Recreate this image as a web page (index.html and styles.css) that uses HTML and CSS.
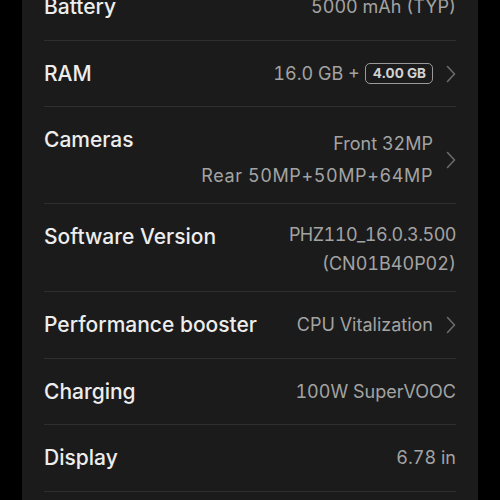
FILE: index.html
```html
<!DOCTYPE html>
<html>
<head>
<meta charset="utf-8">
<link rel="stylesheet" href="styles.css">
</head>
<body>
<div class="panel">
  <div class="row">
    <div class="label">Battery</div>
    <div class="value">5000 mAh (TYP)</div>
  </div>
  <div class="row">
    <div class="label">RAM</div>
    <div class="right">
      <div class="value">16.0 GB +<span class="badge">4.00 GB</span></div>
      <svg class="chev" viewBox="0 0 10 18"><path d="M1.5 1.5 L8.5 9 L1.5 16.5"/></svg>
    </div>
  </div>
  <div class="row row-cameras">
    <div class="label">Cameras</div>
    <div class="right">
      <div class="value multi cams"><div>Front 32MP</div><div class="wide">Rear 50MP+50MP+64MP</div></div>
      <svg class="chev" viewBox="0 0 10 18"><path d="M1.5 1.5 L8.5 9 L1.5 16.5"/></svg>
    </div>
  </div>
  <div class="row row-software">
    <div class="label">Software Version</div>
    <div class="value multi soft"><div class="tight">PHZ110_16.0.3.500</div><div>(CN01B40P02)</div></div>
  </div>
  <div class="row">
    <div class="label">Performance booster</div>
    <div class="right">
      <div class="value">CPU Vitalization</div>
      <svg class="chev" viewBox="0 0 10 18"><path d="M1.5 1.5 L8.5 9 L1.5 16.5"/></svg>
    </div>
  </div>
  <div class="row">
    <div class="label">Charging</div>
    <div class="value">100W SuperVOOC</div>
  </div>
  <div class="row">
    <div class="label">Display</div>
    <div class="value">6.78 in</div>
  </div>
</div>
</body>
</html>
```
FILE: styles.css
```css
html, body {
  margin: 0;
  padding: 0;
  background: #000;
  height: 500px;
  overflow: hidden;
}
body {
  font-family: Inter, "Noto Sans", sans-serif;
}
.panel {
  margin: -26px 22px 0 22px;
  background: #1b1b1b;
  padding: 0 22px 40px;
}
.row {
  display: flex;
  justify-content: space-between;
  align-items: center;
  padding: 20px 0 19.5px;
  border-bottom: 1px solid #2f2f2f;
}
.label {
  font-size: 21px;
  line-height: 26px;
  font-weight: 500;
  color: #ededed;
}
.right {
  display: flex;
  align-items: center;
  gap: 13px;
}
.value {
  font-size: 18px;
  line-height: 26px;
  color: #a3a3a3;
  text-align: right;
  display: flex;
  align-items: center;
  font-variant-numeric: tabular-nums;
}
.value.multi {
  display: block;
}
.wide {
  letter-spacing: 0.6px;
}
.tight {
  letter-spacing: -0.5px;
}
.badge {
  display: inline-block;
  box-sizing: border-box;
  border: 1.5px solid #9a9a9a;
  border-radius: 5px;
  padding: 0 6px 0 7px;
  height: 21px;
  line-height: 18px;
  font-size: 13.5px;
  font-weight: 700;
  color: #d2d2d2;
  margin-left: 5px;
  font-variant-numeric: normal;
}
.chev {
  width: 10px;
  height: 18px;
  fill: none;
  stroke: #6b6b6b;
  stroke-width: 1.6;
  stroke-linecap: round;
  stroke-linejoin: round;
}
.row-cameras {
  align-items: flex-start;
  padding-bottom: 11px;
}
.row-cameras .right {
  align-self: stretch;
}
.cams {
  line-height: 32px;
  padding-top: 1px;
}
.row-software {
  align-items: flex-start;
  padding-top: 15.5px;
  padding-bottom: 13.5px;
}
.row-software .label {
  margin-top: 4.5px;
}
.soft {
  line-height: 29px;
}
```
